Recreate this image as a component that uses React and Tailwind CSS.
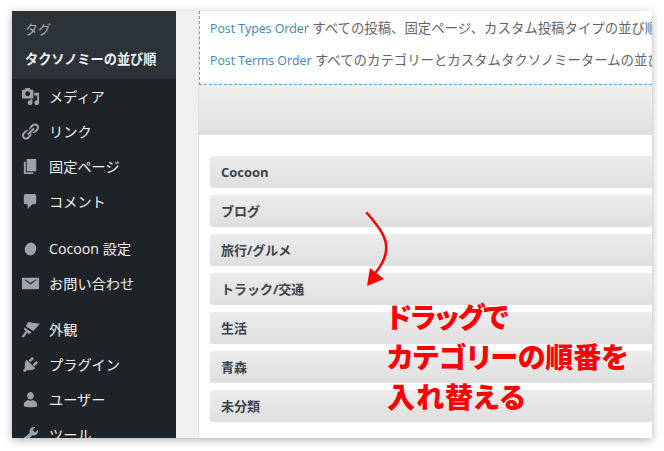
import React from 'react';

const FONT = "font-['Open_Sans','Noto_Sans_CJK_JP',sans-serif]";

const LINK_END = 'M17.74 2.76c1.68 1.69 1.68 4.41 0 6.1l-1.53 1.52c-1.12 1.12-2.7 1.47-4.14 1.09l2.62-2.61.76-.77.76-.76c.84-.84.84-2.2 0-3.04-.84-.85-2.2-.85-3.04 0l-.77.76-3.38 3.38c-.37-1.44-.02-3.02 1.1-4.14l1.52-1.53c1.69-1.68 4.42-1.68 6.1 0z';

const ICONS = {
  media: (
    <path d="M13 11V4c0-.55-.45-1-1-1h-1.67L9 1H5L3.67 3H2c-.55 0-1 .45-1 1v7c0 .55.45 1 1 1h10c.55 0 1-.45 1-1zM7 4.5c1.38 0 2.5 1.12 2.5 2.5S8.38 9.5 7 9.5 4.5 8.38 4.5 7 5.62 4.5 7 4.5zM14 6h5v10.5c0 1.38-1.12 2.5-2.5 2.5S14 17.88 14 16.5s1.12-2.5 2.500-2.500c.17 0 .34.02.5.05V9h-3V6zm-4 8.050V13h2v3.500c0 1.380-1.120 2.500-2.500 2.500S7 17.880 7 16.500 8.120 14 9.500 14c.17 0 .34.020.5.050z" fillRule="evenodd" />
  ),
  link: (
    <g>
      <path d={LINK_END} />
      <path d={LINK_END} transform="rotate(180 10 10)" />
      <path d="M8.590 13.430l5.340-5.340c.42-.42.42-1.100 0-1.520-.44-.43-1.130-.39-1.530 0l-5.330 5.340c-.42.42-.42 1.100 0 1.520.43.43 1.090.39 1.520 0z" />
    </g>
  ),
  page: <path d="M6 15V2h10v13H6zm-1 1h8v2H3V5h2v11z" />,
  comment: <path d="M5 2h9c1.100 0 2 .9 2 2v7c0 1.100-.9 2-2 2h-2l-5 5v-5H5c-1.100 0-2-.9-2-2V4c0-1.100.9-2 2-2z" />,
  cocoon: <ellipse cx="10" cy="10.500" rx="6" ry="6.900" transform="rotate(15 10 10.500)" />,
  mail: <path d="M1 4h18v12H1zM3.500 6 10 11l6.500-5H15l-5 3.600L5 6z" fillRule="evenodd" />,
  brush: <path d="M7.500 2 20 4 13 11.500 5 6.500zM4 8l7 5-2 2-2.500-1.500-3.500 5-2.500-1 4.500-6L3 10z" />,
  plugin: (
    <path d="M13.110 4.360L9.870 7.600 8 5.730l3.240-3.240c.35-.34 1.050-.2 1.560.32.52.51.66 1.210.31 1.550zm-8 1.770l.91-1.120 9.010 9.010-1.190.84c-.71.71-2.630 1.160-3.820 1.160H6.140L4.900 17.260c-.59.59-1.540.59-2.120 0-.59-.58-.59-1.530 0-2.120l1.240-1.240v-3.880c0-1.130.4-3.190 1.090-3.890zm7.260 3.970l3.240-3.240c.34-.35 1.040-.21 1.550.31.52.51.66 1.210.31 1.560l-3.240 3.250z" />
  ),
  user: <path d="M10 2.200a3.500 3.500 0 0 1 3.500 3.800c0 2.200-1.500 4-3.500 4S6.500 8.200 6.500 6A3.500 3.500 0 0 1 10 2.200zM3 17v-2c0-2.500 3-4 4.500-4.500 1.500 1 3.500 1 5 0C14 11 17 12.500 17 15v2c-4 1.500-10 1.500-14 0z" />,
  tool: (
    <path d="M16.680 9.770c-1.340 1.340-3.300 1.670-4.950.99l-5.410 6.520c-.99.99-2.590.99-3.580 0s-.99-2.590 0-3.570l6.520-5.420c-.68-1.650-.35-3.610.99-4.950 1.280-1.280 3.120-1.620 4.720-1.060l-2.890 2.890 2.820 2.820 2.890-2.890c.56 1.600.22 3.440-1.060 4.720z" />
  ),
};

const GROUP_A = [
  { icon: 'media', label: 'メディア' },
  { icon: 'link', label: 'リンク' },
  { icon: 'page', label: '固定ページ' },
  { icon: 'comment', label: 'コメント' },
];
const GROUP_B = [
  { icon: 'cocoon', label: 'Cocoon 設定' },
  { icon: 'mail', label: 'お問い合わせ' },
];
const GROUP_C = [
  { icon: 'brush', label: '外観' },
  { icon: 'plugin', label: 'プラグイン' },
  { icon: 'user', label: 'ユーザー' },
  { icon: 'tool', label: 'ツール' },
];
const CATEGORIES = ['Cocoon', 'ブログ', '旅行/グルメ', 'トラック/交通', '生活', '青森', '未分類'];

function MenuItem({ icon, label }) {
  return (
    <div className="flex items-center pl-[9px] gap-[9px] text-[14.200px] text-[#f0f0f1] h-[35px]">
      <svg viewBox="0 0 20 20" className="w-[19px] h-[19px] shrink-0" fill="#9ca2a7">
        {ICONS[icon]}
      </svg>
      <span className="whitespace-nowrap">{label}</span>
    </div>
  );
}

export default function App() {
  return (
    <div className={`${FONT} w-[664px] h-[451px] bg-white pt-[11px] pl-[12px] overflow-hidden`}>
      <div className="relative flex w-[640px] h-[427px] overflow-hidden bg-white shadow-[0_2px_8px_rgba(0,0,0,0.3)]">
        {/* admin sidebar */}
        <div className="w-[164px] shrink-0 bg-[#1d2327]">
          <div className="h-[68px] bg-[#2c3338] pt-[8px] pl-[13px]">
            <div className="text-[13px] leading-[20px] text-[#a7aaad]">タグ</div>
            <div className="mt-[10px] text-[13.200px] leading-[20px] font-bold text-[#f0f0f1] whitespace-nowrap">
              タクソノミーの並び順
            </div>
          </div>
          {GROUP_A.map((m) => <MenuItem key={m.label} {...m} />)}
          <div className="h-[12px]" />
          {GROUP_B.map((m) => <MenuItem key={m.label} {...m} />)}
          <div className="h-[11px]" />
          {GROUP_C.map((m) => <MenuItem key={m.label} {...m} />)}
        </div>

        <div className="w-[23px] shrink-0 bg-[#f0f0f1] border-r border-[#e2e2e3]" />

        {/* content */}
        <div className="flex-1 min-w-0 overflow-hidden">
          <div className="h-[74px] pl-[10px] border-l border-b border-dashed border-[#5aa5d8] text-[13.400px] text-[#5f6569] whitespace-nowrap overflow-hidden">
            <div className="pt-[7px] leading-[20px]">
              <span className="text-[#3a85bd] text-[12.300px]">Post Types Order</span> すべての投稿、固定ページ、カスタム投稿タイプの並び順
            </div>
            <div className="pt-[11px] leading-[20px]">
              <span className="text-[#3a85bd] text-[12.300px]">Post Terms Order</span> すべてのカテゴリーとカスタムタクソノミータームの並び順
            </div>
          </div>
          <div className="h-[50px] bg-gradient-to-b from-[#f0f0f0] to-[#dfdfdf]" />
          <div className="pt-[21px] pl-[11px] flex flex-col gap-[7px]">
            {CATEGORIES.map((c) => (
              <div
                key={c}
                className="w-[460px] h-[32px] flex items-center pl-[11px] pt-[2px] rounded-[3px] bg-gradient-to-b from-[#ececec] to-[#dfdfdf] text-[13px] font-bold text-[#3c434a]"
              >
                {c}
              </div>
            ))}
          </div>
        </div>

        {/* annotation over the list */}
        <svg viewBox="0 0 40 90" className="absolute left-[345px] top-[198px] w-[40px] h-[90px]" fill="none">
          <path d="M10 4C20 16 31 28 29 42C28 50 24 57 19 63" stroke="#ff0000" strokeWidth="2.500" strokeLinecap="round" />
          <path d="M10 77L13 59L27 70Z" fill="#ff0000" />
        </svg>
        <div className="absolute left-[375px] top-[286px] text-[28px] leading-[40px] font-black text-[#ff0000] whitespace-nowrap [font-feature-settings:'palt']">
          <div className="tracking-[-1px]">ドラッグで</div>
          <div>カテゴリーの順番を</div>
          <div className="tracking-[1px]">入れ替える</div>
        </div>
      </div>
    </div>
  );
}
